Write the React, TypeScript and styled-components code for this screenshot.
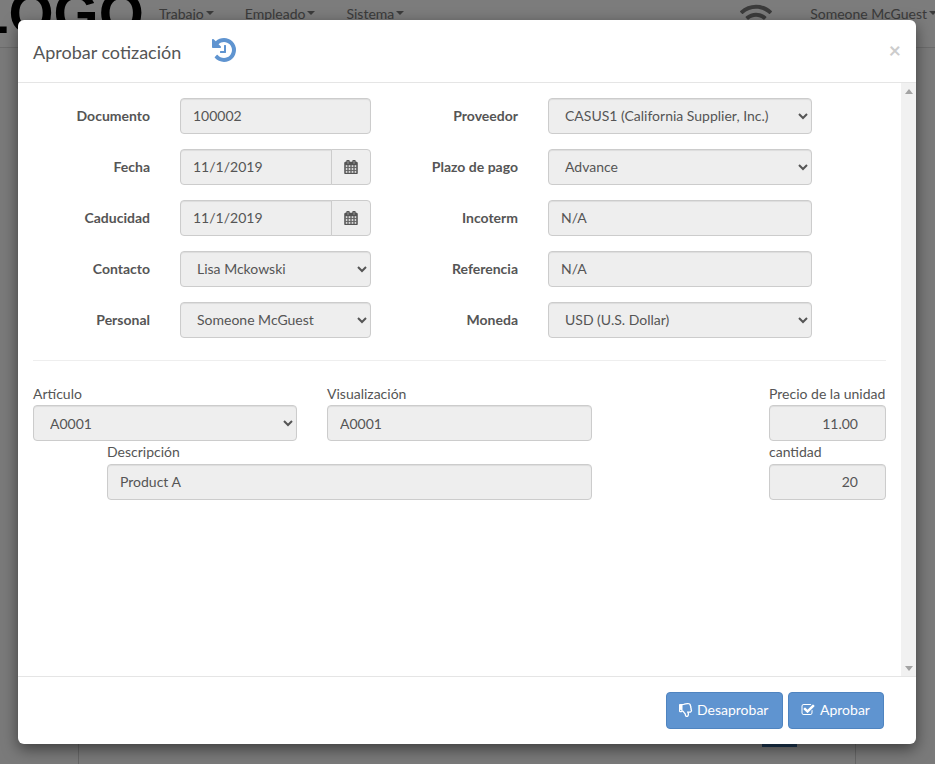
import React from 'react'
import styled, { createGlobalStyle } from 'styled-components'
import { FaRegThumbsDown, FaWifi } from 'react-icons/fa'

const GlobalStyle = createGlobalStyle`
  html, body {
    margin: 0;
    height: 100%;
    overflow: hidden;
    font-family: Lato, "Liberation Sans", sans-serif;
    font-size: 14px;
    color: #555;
    background: #fff;
  }
  * { box-sizing: border-box; }
`

const leftFields = [
  { label: 'Documento', value: '100002', kind: 'input' },
  { label: 'Fecha', value: '11/1/2019', kind: 'date' },
  { label: 'Caducidad', value: '11/1/2019', kind: 'date' },
  { label: 'Contacto', value: 'Lisa Mckowski', kind: 'select' },
  { label: 'Personal', value: 'Someone McGuest', kind: 'select' },
]

const rightFields = [
  { label: 'Proveedor', value: 'CASUS1 (California Supplier, Inc.)', kind: 'select' },
  { label: 'Plazo de pago', value: 'Advance', kind: 'select' },
  { label: 'Incoterm', value: 'N/A', kind: 'input' },
  { label: 'Referencia', value: 'N/A', kind: 'input' },
  { label: 'Moneda', value: 'USD (U.S. Dollar)', kind: 'select' },
]

// font-awesome 4 glyphs, the package only ships the 5 versions
const HistoryGlyph = () => (
  <svg width="28" height="28" viewBox="0 0 1792 1792" fill="currentColor">
    <path d="M1664 896q0 156-61 298t-164 245-245 164-298 61q-172 0-327-72.500t-264-204.500q-7-10-6.500-22.500t8.500-20.500l137-138q10-9 25-9 16 2 23 12 73 95 179 147t225 52q104 0 198.500-40.500t163.500-109.500 109.500-163.500 40.500-198.500-40.500-198.500-109.500-163.500-163.500-109.500-198.500-40.500q-98 0-188 35.500t-160 101.500l137 138q31 30 14 69-17 40-59 40h-448q-26 0-45-19t-19-45v-448q0-42 40-59 39-17 69 14l130 129q107-101 244.500-156.500t284.500-55.500q156 0 298 61t245 164 164 245 61 298zm-640-288v448q0 14-9 23t-23 9h-320q-14 0-23-9t-9-23v-64q0-14 9-23t23-9h224v-352q0-14 9-23t23-9h64q14 0 23 9t9 23z" />
  </svg>
)

const CalendarGlyph = () => (
  <svg width="14" height="14" viewBox="0 0 1792 1792" fill="currentColor" stroke="currentColor" strokeWidth="70">
    <path d="M192 1664h288v-288h-288v288zm352 0h320v-288h-320v288zm-352-352h288v-320h-288v320zm352 0h320v-320h-320v320zm-352-384h288v-288h-288v288zm736 736h320v-288h-320v288zm-384-736h320v-288h-320v288zm768 736h288v-288h-288v288zm-384-352h320v-320h-320v320zm-352-864v-288q0-13-9.500-22.500t-22.500-9.500h-64q-13 0-22.500 9.500t-9.500 22.500v288q0 13 9.500 22.500t22.500 9.500h64q13 0 22.500-9.500t9.500-22.500zm736 864h288v-320h-288v320zm-384-384h320v-288h-320v288zm384 0h288v-288h-288v288zm32-480v-288q0-13-9.500-22.500t-22.500-9.500h-64q-13 0-22.500 9.500t-9.500 22.500v288q0 13 9.500 22.500t22.500 9.500h64q13 0 22.500-9.500t9.500-22.500zm384-64v1280q0 52-38 90t-90 38h-1408q-52 0-90-38t-38-90v-1280q0-52 38-90t90-38h128v-96q0-66 47-113t113-47h64q66 0 113 47t47 113v96h384v-96q0-66 47-113t113-47h64q66 0 113 47t47 113v96h128q52 0 90 38t38 90z" />
  </svg>
)

const CheckGlyph = () => (
  <svg width="14" height="14" viewBox="0 0 1792 1792" fill="currentColor">
    <path d="M1472 930v318q0 119-84.500 203.500t-203.500 84.500h-832q-119 0-203.500-84.500t-84.500-203.500v-832q0-119 84.500-203.500t203.500-84.500h832q63 0 117 25 15 7 18 23 3 17-9 29l-49 49q-10 10-23 10-3 0-9-2-23-6-45-6h-832q-66 0-113 47t-47 113v832q0 66 47 113t113 47h832q66 0 113-47t47-113v-254q0-13 9-22l64-64q10-10 23-10 6 0 12 3 20 8 20 29zm231-489l-814 814q-24 24-57 24t-57-24l-430-430q-24-24-24-57t24-57l110-110q24-24 57-24t57 24l263 263 647-647q24-24 57-24t57 24l110 110q24 24 24 57t-24 57z" />
  </svg>
)

const Control = ({ kind, value }: { kind: string; value: string }) => {
  if (kind === 'select') {
    return (
      <SelectBox disabled defaultValue={value}>
        <option>{value}</option>
      </SelectBox>
    )
  }
  if (kind === 'date') {
    return (
      <InputGroup>
        <GroupInput readOnly value={value} />
        <Addon><CalendarGlyph /></Addon>
      </InputGroup>
    )
  }
  return <TextBox readOnly value={value} />
}

const App = () => {
  return (
    <Page>
      <GlobalStyle />
      <Navbar>
        <Logo>LOGO</Logo>
        <NavMenu>
          <NavItem>Trabajo<Caret /></NavItem>
          <NavItem>Empleado<Caret /></NavItem>
          <NavItem>Sistema<Caret /></NavItem>
        </NavMenu>
        <NavRight>
          <FaWifi size={32} color="#777" />
          <NavItem>Someone McGuest<Caret /></NavItem>
        </NavRight>
      </Navbar>
      <ContentPanel>
        <DarkTab />
      </ContentPanel>
      <Backdrop />
      <Modal>
        <ModalHeader>
          <Title>Aprobar cotización</Title>
          <HistoryIcon><HistoryGlyph /></HistoryIcon>
          <Close>×</Close>
        </ModalHeader>
        <ModalBody>
          <BodyContent>
            <TopForm>
              <FormColumn $labelWidth={117} $controlWidth={191}>
                {leftFields.map(f => (
                  <React.Fragment key={f.label}>
                    <SideLabel>{f.label}</SideLabel>
                    <Control kind={f.kind} value={f.value} />
                  </React.Fragment>
                ))}
              </FormColumn>
              <FormColumn $labelWidth={147} $controlWidth={264}>
                {rightFields.map(f => (
                  <React.Fragment key={f.label}>
                    <SideLabel>{f.label}</SideLabel>
                    <Control kind={f.kind} value={f.value} />
                  </React.Fragment>
                ))}
              </FormColumn>
            </TopForm>
            <Divider />
            <LineForm>
              <LineRow>
                <Field $width={264}>
                  <TopLabel>Artículo</TopLabel>
                  <UpperSelect disabled defaultValue="A0001">
                    <option>A0001</option>
                  </UpperSelect>
                </Field>
                <Field $width={265}>
                  <TopLabel>Visualización</TopLabel>
                  <UpperBox readOnly value="A0001" />
                </Field>
                <PriceField>
                  <TopLabel>Precio de la unidad</TopLabel>
                  <UpperNumberBox readOnly value="11.00" />
                </PriceField>
              </LineRow>
              <LineRow>
                <DescriptionField>
                  <LowerLabel>Descripción</LowerLabel>
                  <TextBox readOnly value="Product A" />
                </DescriptionField>
                <PriceField>
                  <LowerLabel>cantidad</LowerLabel>
                  <NumberBox readOnly value="20" />
                </PriceField>
              </LineRow>
            </LineForm>
          </BodyContent>
          <Scrollbar>
            <ArrowUp />
            <ArrowDown />
          </Scrollbar>
        </ModalBody>
        <ModalFooter>
          <Button $width={117}><ThumbIcon size={14} />Desaprobar</Button>
          <Button $width={96}><CheckGlyph />Aprobar</Button>
        </ModalFooter>
      </Modal>
    </Page>
  )
}

export default App

const Page = styled.div`
  position: relative;
  height: 764px;
  overflow: hidden;
  background: #f5f5f5;
`

const Navbar = styled.div`
  height: 48px;
  display: flex;
  align-items: flex-start;
  background: #f8f8f8;
  border-bottom: 1px solid #d8d8d8;
  overflow: hidden;
`

const Logo = styled.div`
  width: 186px;
  margin-left: -27px;
  flex-shrink: 0;
  margin-top: -19px;
  font-family: "Liberation Sans", sans-serif;
  font-weight: 700;
  font-size: 58px;
  line-height: 64px;
  color: #000;
  white-space: nowrap;
`

const NavMenu = styled.div`
  display: flex;
  gap: 31px;
  padding-top: 3px;
`

const NavRight = styled.div`
  margin-left: auto;
  display: flex;
  gap: 38px;
  padding-top: 3px;
  margin-right: -2px;

  svg {
    margin-top: -3px;
  }
`

const NavItem = styled.div`
  display: flex;
  align-items: center;
  height: 20px;
  white-space: nowrap;
  color: #777;
`

const Caret = styled.span`
  margin-left: 2px;
  border-top: 4px solid #777;
  border-left: 4px solid transparent;
  border-right: 4px solid transparent;
`

const ContentPanel = styled.div`
  width: 778px;
  height: 716px;
  margin-left: 78px;
  position: relative;
  background: #f5f5f5;
  border-left: 1px solid #ccc;
  border-right: 1px solid #ccc;
`

const DarkTab = styled.div`
  position: absolute;
  left: 683px;
  top: 696px;
  width: 35px;
  height: 3px;
  background: #3a6ea5;
`

const Backdrop = styled.div`
  position: absolute;
  inset: 0;
  background: rgba(0, 0, 0, 0.5);
`

const Modal = styled.div`
  position: absolute;
  left: 18px;
  top: 20px;
  width: 898px;
  height: 724px;
  display: flex;
  flex-direction: column;
  background: #fff;
  border-radius: 6px;
  box-shadow: 0 5px 15px rgba(0, 0, 0, 0.5);
`

const ModalHeader = styled.div`
  height: 63px;
  flex-shrink: 0;
  display: flex;
  align-items: flex-start;
  padding: 19px 15px 0;
  border-bottom: 1px solid #e5e5e5;
`

const Title = styled.h4`
  margin: 0;
  font-size: 18px;
  font-weight: 400;
  line-height: 26px;
  color: #555;
  width: 179px;
`

const HistoryIcon = styled.span`
  display: block;
  margin-top: -3px;
  margin-left: -2px;
  color: #5f94d0;
`

const Close = styled.span`
  margin-left: auto;
  font-size: 21px;
  font-weight: 700;
  line-height: 22px;
  color: #ccc;
`

const ModalBody = styled.div`
  flex: 1;
  display: flex;
  min-height: 0;
`

const BodyContent = styled.div`
  flex: 1;
  padding: 15px 15px 0;
`

const Scrollbar = styled.div`
  width: 15px;
  display: flex;
  flex-direction: column;
  justify-content: space-between;
  align-items: center;
  padding: 6px 0 5px;
  background: #f1f1f1;
`

const ArrowUp = styled.span`
  border-bottom: 5px solid #a3a3a3;
  border-left: 4px solid transparent;
  border-right: 4px solid transparent;
`

const ArrowDown = styled.span`
  border-top: 5px solid #a3a3a3;
  border-left: 4px solid transparent;
  border-right: 4px solid transparent;
`

const TopForm = styled.div`
  display: flex;
`

const FormColumn = styled.div<{ $labelWidth: number; $controlWidth: number }>`
  display: grid;
  grid-template-columns: ${({ $labelWidth }) => $labelWidth}px ${({ $controlWidth }) => $controlWidth}px;
  column-gap: 30px;
  row-gap: 15px;
  align-items: center;
`

const SideLabel = styled.label`
  font-weight: 700;
  text-align: right;
  white-space: nowrap;
  padding-bottom: 2px;
`

const fieldStyle = `
  width: 100%;
  height: 36px;
  border: 1px solid #ccc;
  border-radius: 4px;
  background-color: #eee;
  color: #555;
  font-family: Lato, "Liberation Sans", sans-serif;
  font-size: 14px;
  box-shadow: inset 0 1px 1px rgba(0, 0, 0, 0.075);
  opacity: 1;
  outline: none;
`

const TextBox = styled.input`
  ${fieldStyle}
  padding: 5px 12px 7px;
`

const NumberBox = styled(TextBox)`
  text-align: right;
  padding-right: 27px;
`

const SelectBox = styled.select`
  ${fieldStyle}
  padding: 5px 12px 7px;
`

// the first item row sits half a pixel lower in the reference, so its text drops by one
const UpperBox = styled(TextBox)`
  padding: 6px 12px;
`

const UpperNumberBox = styled(NumberBox)`
  padding: 6px 27px 6px 12px;
`

const UpperSelect = styled(SelectBox)`
  padding: 6px 12px;
`

const InputGroup = styled.div`
  display: flex;
  width: 100%;
`

const GroupInput = styled(TextBox)`
  flex: 1;
  min-width: 0;
  border-radius: 4px 0 0 4px;
`

const Addon = styled.span`
  width: 40px;
  height: 36px;
  flex-shrink: 0;
  display: flex;
  align-items: center;
  justify-content: center;
  margin-left: -1px;
  border: 1px solid #ccc;
  border-radius: 0 4px 4px 0;
  background: #eee;
  color: #555;
`

const Divider = styled.hr`
  margin: 22px 0 0;
  border: 0;
  border-top: 1px solid #eee;
`

const LineForm = styled.div`
  display: flex;
  flex-direction: column;
  gap: 1px;
  margin-top: 23px;
`

const LineRow = styled.div`
  display: flex;
  gap: 30px;
`

const Field = styled.div<{ $width: number }>`
  width: ${({ $width }) => $width}px;
`

const DescriptionField = styled.div`
  width: 485px;
  margin-left: 74px;
`

const PriceField = styled.div`
  width: 117px;
  margin-left: auto;
`

const TopLabel = styled.label`
  display: block;
  height: 20px;
  margin-bottom: 1px;
  line-height: 20px;
  white-space: nowrap;
`

const LowerLabel = styled(TopLabel)`
  margin-bottom: 2px;
`

const ModalFooter = styled.div`
  height: 68px;
  flex-shrink: 0;
  display: flex;
  justify-content: flex-end;
  gap: 5px;
  padding: 15px 32px 0 0;
  border-top: 1px solid #e5e5e5;
`

const Button = styled.button<{ $width: number }>`
  width: ${({ $width }) => $width}px;
  height: 37px;
  display: flex;
  align-items: center;
  gap: 5px;
  padding: 0 0 2px 12px;
  border: 1px solid #4f84c0;
  border-radius: 4px;
  background: #5f94d0;
  color: #fff;
  font-family: Lato, "Liberation Sans", sans-serif;
  font-size: 14px;
`

const ThumbIcon = styled(FaRegThumbsDown)`
  margin-right: -1px;
`
